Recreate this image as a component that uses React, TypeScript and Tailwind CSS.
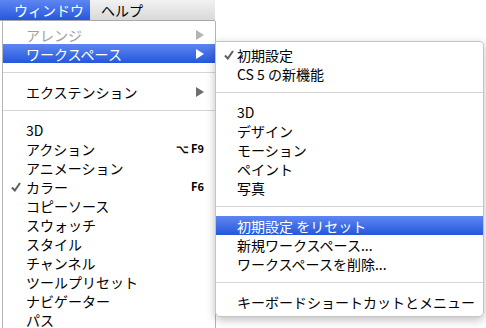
import React from "react";

type Item =
  | { kind: "sep" }
  | {
      kind?: "item";
      label: string;
      check?: boolean;
      disabled?: boolean;
      active?: boolean;
      arrow?: boolean;
      shortcut?: string;
    };

const mainItems: Item[] = [
  { label: "アレンジ", disabled: true, arrow: true },
  { label: "ワークスペース", active: true, arrow: true },
  { kind: "sep" },
  { label: "エクステンション", arrow: true },
  { kind: "sep" },
  { label: "3D" },
  { label: "アクション", shortcut: "⌥ F9" },
  { label: "アニメーション" },
  { label: "カラー", check: true, shortcut: "F6" },
  { label: "コピーソース" },
  { label: "スウォッチ" },
  { label: "スタイル" },
  { label: "チャンネル" },
  { label: "ツールプリセット" },
  { label: "ナビゲーター" },
  { label: "パス" },
];

const subItems: Item[] = [
  { label: "初期設定", check: true },
  { label: "CS 5 の新機能" },
  { kind: "sep" },
  { label: "3D" },
  { label: "デザイン" },
  { label: "モーション" },
  { label: "ペイント" },
  { label: "写真" },
  { kind: "sep" },
  { label: "初期設定 をリセット", active: true },
  { label: "新規ワークスペース..." },
  { label: "ワークスペースを削除..." },
  { kind: "sep" },
  { label: "キーボードショートカットとメニュー" },
];

const Arrow = ({ color }: { color: string }) => (
  <svg width="8" height="10" viewBox="0 0 8 10">
    <polygon points="0,0 8,5 0,10" fill={color} />
  </svg>
);

const Check = () => (
  <svg width="10" height="10" viewBox="0 0 10 10">
    <path d="M1 5.5 L3.8 8.5 L9 1" fill="none" stroke="#5e5e5e" strokeWidth="2" />
  </svg>
);

const Row = ({ item, indent }: { item: Item; indent: string }) => {
  if (item.kind === "sep") {
    return (
      <div className="h-[19px] flex items-center">
        <div className="h-px w-full bg-[#d6d6d6]" />
      </div>
    );
  }
  const bg = item.active
    ? "bg-gradient-to-b from-[#5d86f1] to-[#2457dc] text-white"
    : item.disabled
    ? "text-[#a0a0a0]"
    : "text-black";
  return (
    <div className={`relative h-[19px] flex items-center ${indent} pr-[11px] ${bg}`}>
      {item.check && (
        <span className="absolute left-[8px] top-0 h-[19px] flex items-center">
          <Check />
        </span>
      )}
      <span className="flex-1 whitespace-nowrap">{item.label}</span>
      {item.shortcut && (
        <span className="text-[11px] font-bold whitespace-pre">{item.shortcut}</span>
      )}
      {item.arrow && (
        <Arrow color={item.active ? "#ffffff" : item.disabled ? "#b4b4b4" : "#6e6e6e"} />
      )}
    </div>
  );
};

export default function App() {
  return (
    <div
      className="relative w-[486px] h-[328px] overflow-hidden bg-white text-[14px] leading-none"
      style={{ fontFamily: '"Noto Sans CJK JP", "Noto Sans", sans-serif' }}
    >
      {/* menu bar */}
      <div className="flex w-[215px] h-[21px] bg-gradient-to-b from-[#f2f2f2] to-[#d9d9d9] border-b border-[#a9a9a9]">
        <div className="flex items-center h-full w-[90px] pl-[14px] bg-gradient-to-b from-[#5d86f1] to-[#2457dc] text-white">
          ウィンドウ
        </div>
        <div className="flex items-center h-full pl-[11px] text-black">ヘルプ</div>
      </div>

      {/* faint page content behind the translucent submenu */}
      <div className="absolute left-[323px] top-[104px] w-[58px] h-[42px] rounded bg-[#eef3fa]" />

      {/* main menu */}
      <div className="absolute left-[2px] top-[21px] w-[214px] h-[310px] bg-white border-l border-r border-[#b5b5b5] pt-[4px]">
        {mainItems.map((it, i) => (
          <Row key={i} item={it} indent="pl-[23px]" />
        ))}
      </div>

      {/* submenu */}
      <div className="absolute left-[215px] top-[41px] w-[269px] bg-white/95 border border-[#c4c4c4] rounded-b-[5px] rounded-tr-[4px] shadow-[0_3px_10px_rgba(0,0,0,0.25)] pt-[3px] pb-[5px]">
        {subItems.map((it, i) => (
          <Row key={i} item={it} indent="pl-[21px]" />
        ))}
      </div>
    </div>
  );
}
